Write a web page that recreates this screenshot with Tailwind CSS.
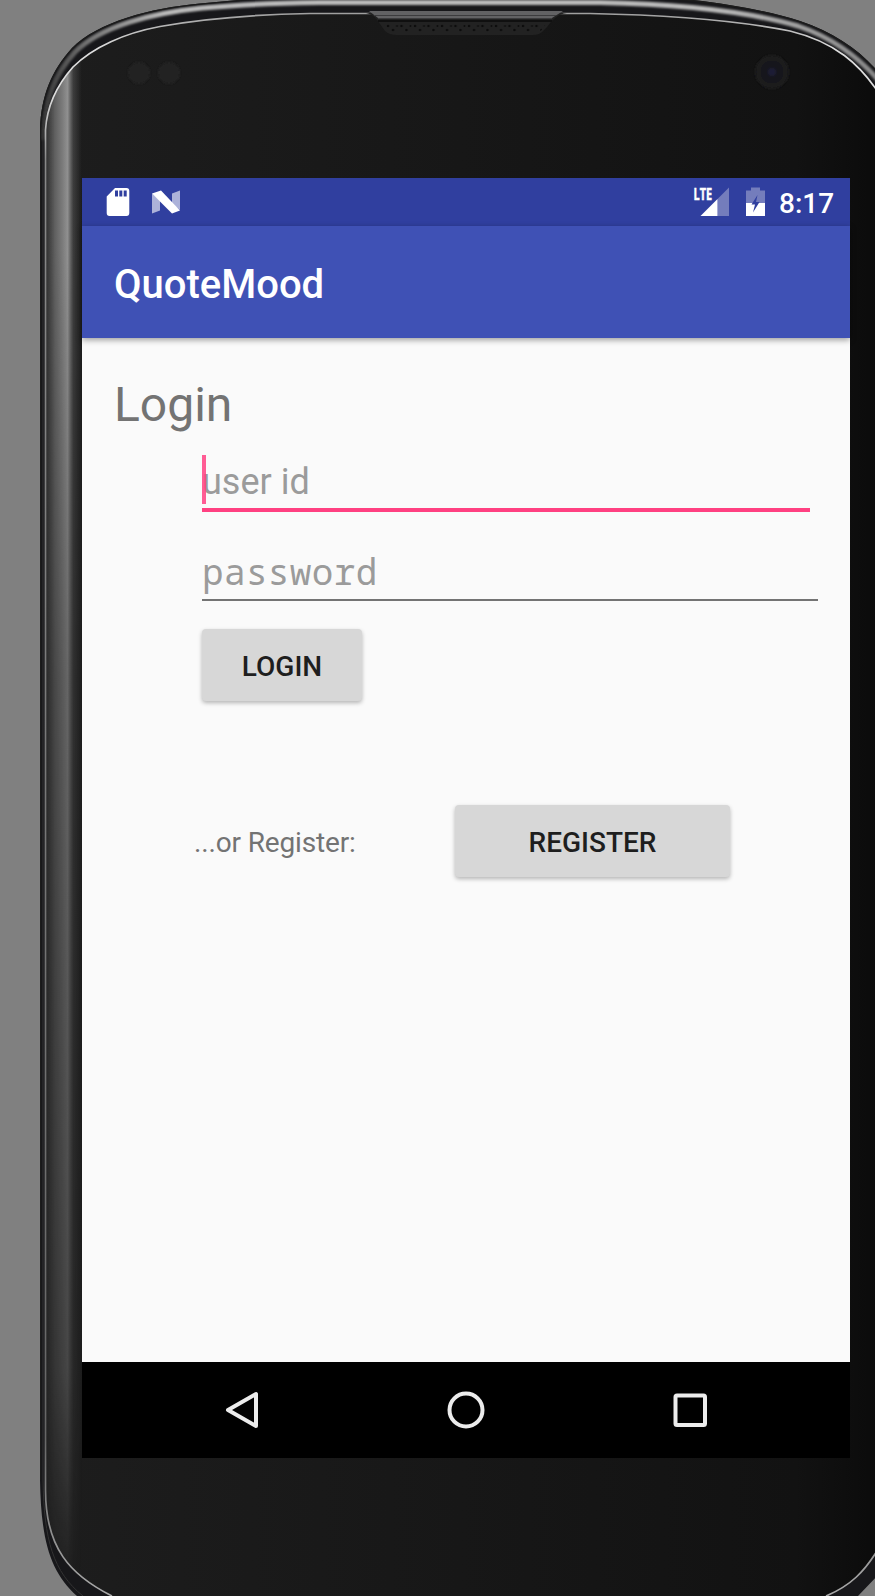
<!DOCTYPE html>
<html lang="en">
<head>
<meta charset="utf-8">
<title>QuoteMood</title>
<script src="https://cdn.jsdelivr.net/npm/@tailwindcss/browser@4"></script>
</head>
<body class="bg-[#808080] font-['Roboto',sans-serif]">
<div class="relative w-[875px] h-[1596px] overflow-hidden pt-[178px] pl-[82px]">
  <!-- phone body -->
  <svg class="absolute inset-0" width="875" height="1596" viewBox="0 0 875 1596">
    <defs>
      <linearGradient id="face" x1="0" x2="1"><stop offset="0" stop-color="#1d1d1d"/><stop offset=".5" stop-color="#171717"/><stop offset=".9" stop-color="#121212"/><stop offset="1" stop-color="#0b0b0b"/></linearGradient>
      <linearGradient id="strip" x1="46" x2="82" y1="0" y2="0" gradientUnits="userSpaceOnUse"><stop offset="0" stop-color="#888" stop-opacity=".25"/><stop offset=".25" stop-color="#999" stop-opacity=".75"/><stop offset=".6" stop-color="#bbb"/><stop offset=".76" stop-color="#999" stop-opacity=".35"/><stop offset="1" stop-color="#888" stop-opacity="0"/></linearGradient>
      <linearGradient id="fade" x1="0" x2="0" y1="65" y2="1596" gradientUnits="userSpaceOnUse"><stop offset="0" stop-color="#bbb"/><stop offset=".12" stop-color="#bbb"/><stop offset=".4" stop-color="#777"/><stop offset=".85" stop-color="#444"/><stop offset="1" stop-color="#000"/></linearGradient>
      <linearGradient id="rim" x1="40" x2="875" y1="0" y2="0" gradientUnits="userSpaceOnUse"><stop offset="0" stop-color="#333"/><stop offset=".06" stop-color="#777"/><stop offset=".15" stop-color="#bbb"/><stop offset=".8" stop-color="#bbb"/><stop offset="1" stop-color="#888"/></linearGradient>
      <linearGradient id="line" x1="0" x2="0" y1="0" y2="1596" gradientUnits="userSpaceOnUse"><stop offset="0" stop-color="#888"/><stop offset=".03" stop-color="#ddd"/><stop offset=".06" stop-color="#ddd"/><stop offset=".1" stop-color="#888"/><stop offset=".9" stop-color="#666"/><stop offset="1" stop-color="#aaa"/></linearGradient>
      <mask id="m"><rect width="875" height="1596" fill="url(#fade)"/></mask>
      <clipPath id="in"><path d="M45.500 1490V130C47 105 57 85 73 67C93 47 125 33 160 26.500C205 18.500 255 14.500 310 13.500H590C665 15 735 20 790 31C835 42 860 64 880 95V1546C865 1572 850 1586 826 1596H112C70 1575 45.500 1548 45.500 1490Z"/></clipPath>
      <clipPath id="out"><path d="M40 1480V130C41 95 52 70 72 48C98 22 150 8 200 3.500C220 1.500 240 0 260 -2H670C715 1 765 10 800 21C835 33 860 50 880 74V1573L858 1596H77C50 1572 41 1540 40 1480Z"/></clipPath>
      <filter id="soft"><feGaussianBlur stdDeviation="1"/></filter>
      <pattern id="grill" width="13.500" height="8" patternUnits="userSpaceOnUse" x="385" y="24"><circle cx="3" cy="2" r="1.300" fill="#0c0c0c"/><circle cx="8" cy="6" r="1.300" fill="#0c0c0c"/><circle cx="12" cy="2" r="1" fill="#0c0c0c"/></pattern>
    </defs>
    <path d="M40 1480V130C41 95 52 70 72 48C98 22 150 8 200 3.500C220 1.500 240 0 260 -2H670C715 1 765 10 800 21C835 33 860 50 880 74V1573L858 1596H77C50 1572 41 1540 40 1480Z" fill="#17171a"/>
    <g clip-path="url(#out)">
      <path d="M43 140C44 99 55 74 75 52C101 26 152 13 202 8C240 4.500 280 3 320 2.500H600C670 4 740 9 798 26C833 38 858 56 880 82" fill="none" stroke="url(#rim)" stroke-width="5" filter="url(#soft)"/>
      <path d="M40 1480V130C41 95 52 70 72 48C98 22 150 8 200 3.500C220 1.500 240 0 260 -2H670C715 1 765 10 800 21C835 33 860 50 880 74" fill="none" stroke="#1c1c1c" stroke-width="2.500"/>
      <path d="M43 130V1480C44 1540 53 1572 83 1596" fill="none" stroke="#333" stroke-width="1"/>
    </g>
    <g clip-path="url(#in)">
      <rect x="40" width="840" height="1600" fill="url(#face)"/>
      <rect x="46" width="40" height="1596" fill="url(#strip)" mask="url(#m)"/>
    </g>
    <path d="M45.500 1490V130C47 105 57 85 73 67C93 47 125 33 160 26.500C205 18.500 255 14.500 310 13.500H590C665 15 735 20 790 31C835 42 860 64 880 95M880 1546C865 1572 850 1586 826 1596M112 1596C70 1575 45.500 1548 45.500 1490" fill="none" stroke="url(#line)" stroke-width="1.700"/>
    <path d="M366 13H567C558 14 553 19 547 27L542 32Q539 35 533 35H397Q389 35 385 31L380 24C376 18 374 15 366 13Z" fill="#222"/>
    <path d="M369 11H563L552 18H378Z" fill="#626264"/><path d="M374 15.500H556M378 18.500H552" stroke="#3c3c3e" stroke-width="1"/><path d="M378 21H552" stroke="#101010" stroke-width="2"/>
    <path d="M384 24H546L540 32H388Z" fill="url(#grill)"/>
    <g filter="url(#soft)"><circle cx="139" cy="73" r="11" fill="#212121"/><circle cx="169" cy="73" r="11" fill="#222"/>
    <circle cx="772" cy="72" r="17" fill="#1a1a1b"/><circle cx="772" cy="72" r="11" fill="#17171b"/><circle cx="772" cy="72" r="4" fill="#1c1c34"/></g>
  </svg>

  <div class="relative flex flex-col w-[768px] h-[1280px] bg-[#fafafa]">
    <!-- status bar -->
    <div class="flex items-center h-12 shrink-0 bg-[#303f9f] text-white">
      <svg width="110" height="48" viewBox="0 0 110 48">
        <path fill="#fff" fill-rule="evenodd" d="M33 10H44.500Q47.300 10 47.300 13V35Q47.300 38 44.500 38H27.500Q24.700 38 24.700 35V18.500ZM33 12.500V18.500H36V12.500ZM37.300 12.500V18.500H40.300V12.500ZM41.700 12.500V18.500H44.700V12.500Z"/>
        <path d="M70 15.500L78 22V32.500L70 35.500ZM98 12.500L90 15.500V26L98 32Z" fill="#acb2d9"/>
        <path d="M70 15.500L79 12.500L98 32.500L90 35.500Z" fill="#fff"/>
      </svg>
      <svg class="ml-auto" width="160" height="48" viewBox="0 0 160 48">
        <text x="3.500" y="22.300" fill="#fff" stroke="#fff" stroke-width=".5" font-family="Open Sans, sans-serif" font-weight="700" font-size="16.500" textLength="18.500" lengthAdjust="spacingAndGlyphs">LTE</text>
        <path d="M39 9.500V38H27.500V21Z" fill="#747dbc"/><path d="M10.500 38L27.500 21V38Z" fill="#fff"/>
        <path d="M61 9.500H70V12.500H75V25H56V12.500H61Z" fill="#747dbc"/>
        <path d="M56 25H75V38H56Z" fill="#fff"/>
        <path d="M67.500 17L61.500 26.500H65L63 34.500L69.500 24H66Z" fill="#303f9f"/>
        <text x="89" y="34.500" fill="#fff" font-family="Roboto, sans-serif" font-weight="500" font-size="28">8:17</text>
      </svg>
    </div>
    <header class="relative flex items-center h-28 shrink-0 px-8 pt-1.5 bg-[#3f51b5] shadow-[0_2px_6px_rgba(0,0,0,0.38)]">
      <h1 class="text-[40px] leading-[48px] font-medium text-white">QuoteMood</h1>
    </header>

    <!-- login form -->
    <main class="flex flex-col items-start grow pl-8 pt-[39px]">
      <h2 class="text-[48px] leading-[56px] text-[#737373]">Login</h2>
      <div class="relative ml-[88px] mt-[22px] w-[608px] h-[57px] border-b-4 border-[#ff4081] text-[36px] leading-[55px] text-[#9b9b9b]">user id<span class="absolute left-0 top-0 w-1 h-[49px] bg-[#ff4081]/85"></span></div>
      <div class="ml-[88px] mt-[35px] w-[616px] h-[54px] border-b-2 border-[#737373] font-['Noto_Sans_Mono','DejaVu_Sans_Mono',monospace] text-[36px] leading-[50px] tracking-[0.35px] text-[#9b9b9b]">password</div>
      <button class="ml-[88px] mt-7 pt-1 w-40 h-[72px] rounded bg-[#d7d7d7] text-[28px] font-medium text-[#1e1e1e] shadow-[0_2px_4px_rgba(0,0,0,0.28)]">LOGIN</button>
      <div class="flex items-center mt-[104px] ml-20">
        <span class="pt-1 w-[261px] text-[28px] tracking-[-0.15px] text-[#737373]">...or Register:</span>
        <button class="pt-1 w-[275px] h-[72px] rounded bg-[#d7d7d7] text-[28px] font-medium text-[#1e1e1e] shadow-[0_2px_4px_rgba(0,0,0,0.28)]">REGISTER</button>
      </div>
    </main>

    <!-- navigation bar -->
    <nav class="h-24 shrink-0 bg-black">
      <svg width="768" height="96" viewBox="0 0 768 96" fill="none" stroke="#ececec" stroke-width="4">
        <path d="M146 48L174 32V64Z" stroke-linejoin="round"/>
        <circle cx="384" cy="48" r="16.500"/>
        <rect x="593.500" y="33.500" width="29.500" height="29.500" rx="1.500"/>
      </svg>
    </nav>
  </div>
</div>
</body>
</html>
